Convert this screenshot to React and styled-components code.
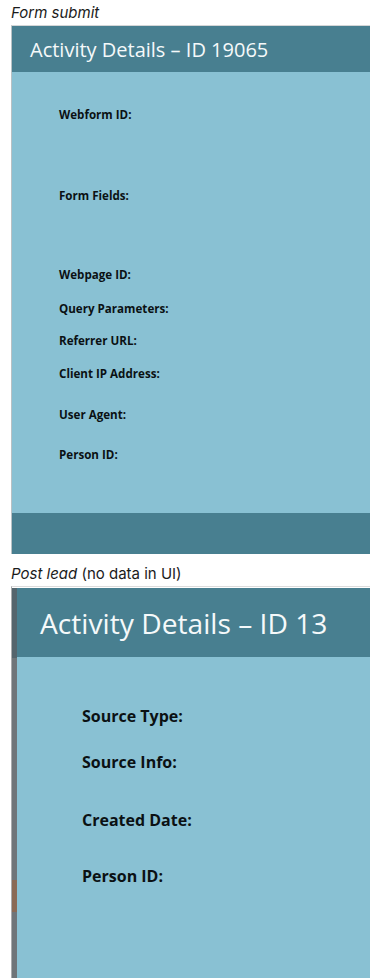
import React from 'react';
import styled, { createGlobalStyle } from 'styled-components';

const GlobalStyle = createGlobalStyle`
  html, body {
    margin: 0;
    padding: 0;
    background: #ffffff;
  }
  body {
    font-family: "Open Sans", "Liberation Sans", sans-serif;
  }
`;

const formSubmitFields = [
  { label: 'Webform ID:', space: 35 },
  { label: 'Form Fields:', space: 65 },
  { label: 'Webpage ID:', space: 63 },
  { label: 'Query Parameters:', space: 18 },
  { label: 'Referrer URL:', space: 16 },
  { label: 'Client IP Address:', space: 17 },
  { label: 'User Agent:', space: 25 },
  { label: 'Person ID:', space: 24 },
];

const postLeadFields = [
  { label: 'Source Type:', space: 48 },
  { label: 'Source Info:', space: 24 },
  { label: 'Created Date:', space: 36 },
  { label: 'Person ID:', space: 34 },
];

const App = () => {
  return (
    <Page>
      <GlobalStyle />
      <Caption $top={3}>
        <em>Form submit</em>
      </Caption>
      <Frame>
        <Panel>
          <Header $height={46} $indent={18}>
            <Title $size={20}>Activity Details – ID 19065</Title>
          </Header>
          <Body $height={441} $indent={47}>
            {formSubmitFields.map(f => (
              <Label key={f.label} $space={f.space} $size={11.6} $line={16}>
                {f.label}
              </Label>
            ))}
          </Body>
          <Footer />
        </Panel>
      </Frame>

      <Caption $top={10}>
        <em>Post lead</em> (no data in UI)
      </Caption>
      <Frame $shaded>
        <Strip>
          <StripPart $height={70} $color="#55656d" />
          <StripPart $height={222} $color="#6f7579" />
          <StripPart $height={32} $color="#8a6a55" />
          <StripPart $height={80} $color="#6f7579" />
        </Strip>
        <Panel>
          <Header $height={69} $indent={23}>
            <Title $size={28.2}>Activity Details – ID 13</Title>
          </Header>
          <Body $height={330} $indent={65}>
            {postLeadFields.map(f => (
              <Label key={f.label} $space={f.space} $size={16} $line={22}>
                {f.label}
              </Label>
            ))}
          </Body>
        </Panel>
      </Frame>
    </Page>
  );
};

const Page = styled.div`
  padding-left: 11px;
  width: 370px;
  box-sizing: border-box;
  overflow: hidden;
`;

const Caption = styled.div`
  margin-top: ${p => p.$top}px;
  margin-bottom: 2px;
  height: 20px;
  line-height: 20px;
  font-family: Inter, "Liberation Sans", sans-serif;
  font-size: 15px;
  color: #1b1b1b;

  em {
    font-style: italic;
  }
`;

const Frame = styled.div`
  display: flex;
  border-top: 1px solid ${p => (p.$shaded ? '#dcdcdc' : '#d4d6d7')};
  border-left: 1px solid ${p => (p.$shaded ? '#a9abad' : '#b9c1c4')};
  padding-top: ${p => (p.$shaded ? 1 : 0)}px;
`;

const Strip = styled.div`
  display: flex;
  flex-direction: column;
  width: 5px;
  flex-shrink: 0;
`;

const StripPart = styled.div`
  height: ${p => p.$height}px;
  background: ${p => p.$color};
`;

const Panel = styled.div`
  flex: 1;
  display: flex;
  flex-direction: column;
`;

const Header = styled.div`
  height: ${p => p.$height}px;
  background: #487f90;
  display: flex;
  align-items: center;
  padding-left: ${p => p.$indent}px;
`;

const Title = styled.div`
  font-family: "Open Sans", "Liberation Sans", sans-serif;
  font-size: ${p => p.$size}px;
  font-weight: 400;
  color: #f5f9fa;
  white-space: nowrap;
`;

const Body = styled.div`
  height: ${p => p.$height}px;
  background: #89c1d3;
  padding-left: ${p => p.$indent}px;
  display: flex;
  flex-direction: column;
`;

const Label = styled.div`
  margin-top: ${p => p.$space}px;
  font-family: "Open Sans", "Liberation Sans", sans-serif;
  font-size: ${p => p.$size}px;
  line-height: ${p => p.$line}px;
  font-weight: 700;
  color: #0b1113;
  white-space: nowrap;
`;

const Footer = styled.div`
  height: 41px;
  background: #487f90;
`;

export default App;
